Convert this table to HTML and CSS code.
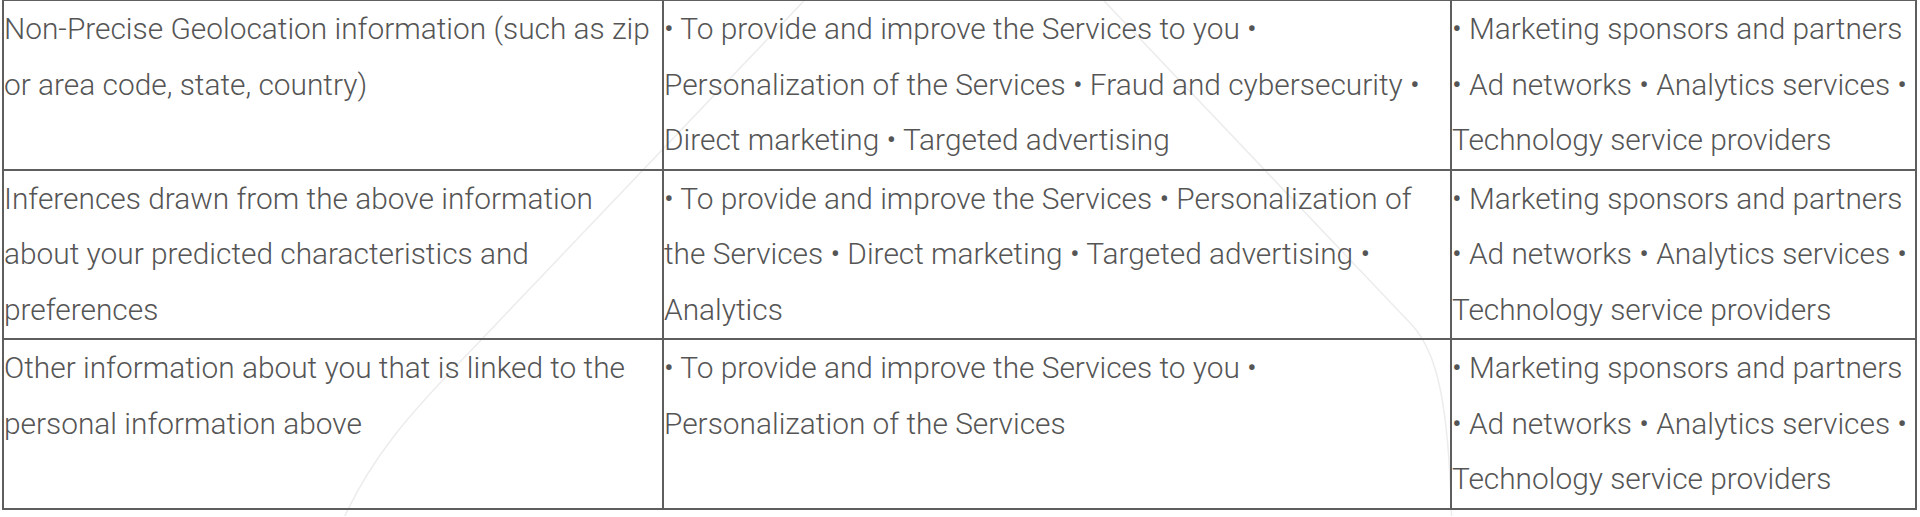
FILE: index.html
```html
<!DOCTYPE html>
<html lang="en">
<head>
<meta charset="utf-8">
<title>Personal information table</title>
<link rel="stylesheet" href="styles.css">
</head>
<body>
<div class="page">
  <svg class="watermark" width="1920" height="517" viewBox="0 0 1920 517" aria-hidden="true">
    <path d="M 820 -15 L 482 340 C 430 395 370 450 335 540" />
    <path d="M 1088 -15 L 1412 326 C 1436 352 1450 400 1452 540" />
  </svg>
  <table class="info-table">
    <colgroup>
      <col class="col-category">
      <col class="col-purpose">
      <col class="col-recipients">
    </colgroup>
    <tbody>
      <tr>
        <td>Non-Precise Geolocation information (such as zip or area code, state, country)</td>
        <td>• To provide and improve the Services to you • Personalization of the Services • Fraud and cybersecurity • Direct marketing • Targeted advertising</td>
        <td>• Marketing sponsors and partners • Ad networks • Analytics services • Technology service providers</td>
      </tr>
      <tr>
        <td>Inferences drawn from the above information about your predicted characteristics and preferences</td>
        <td>• To provide and improve the Services • Personalization of the Services • Direct marketing • Targeted advertising • Analytics</td>
        <td>• Marketing sponsors and partners • Ad networks • Analytics services • Technology service providers</td>
      </tr>
      <tr>
        <td>Other information about you that is linked to the personal information above</td>
        <td>• To provide and improve the Services to you • Personalization of the Services</td>
        <td>• Marketing sponsors and partners • Ad networks • Analytics services • Technology service providers</td>
      </tr>
    </tbody>
  </table>
</div>
</body>
</html>
```

FILE: styles.css
```css
html, body {
  margin: 0;
  padding: 0;
  background: #ffffff;
}

body {
  font-family: Roboto, "Liberation Sans", Arial, sans-serif;
  font-weight: 300;
  font-size: 29.85px;
  line-height: 55.5px;
  color: #555555;
  overflow: hidden;
}

.page {
  position: relative;
  width: 1920px;
  height: 517px;
  padding: 0 0 0 2px;
  box-sizing: border-box;
}

.watermark {
  position: absolute;
  left: 0;
  top: 0;
  pointer-events: none;
  z-index: 0;
}

.watermark path {
  fill: none;
  stroke: #ececec;
  stroke-width: 1.5;
}

.info-table {
  position: relative;
  z-index: 1;
  margin-top: -1px;
  border-collapse: collapse;
  table-layout: fixed;
  width: 1913px;
  border: 2px solid #5e5e5e;
}

.col-category { width: 660px; }
.col-purpose { width: 788px; }
.col-recipients { width: 465px; }

.info-table td {
  border: 2px solid #5e5e5e;
  vertical-align: top;
  padding: 0 0 1px 0;
  text-align: left;
}
```
